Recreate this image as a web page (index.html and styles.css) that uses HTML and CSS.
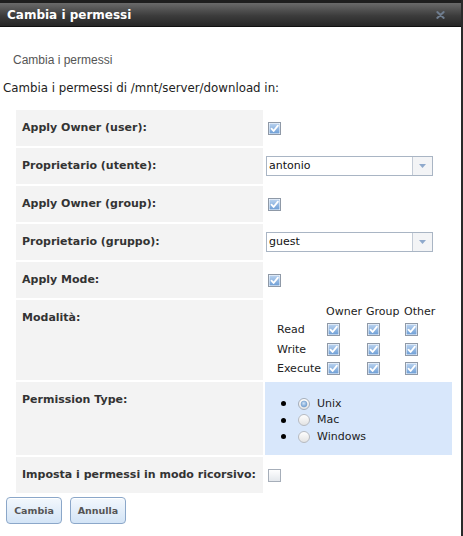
FILE: index.html
```html
<!DOCTYPE html>
<html lang="it">
<head>
<meta charset="utf-8">
<title>Cambia i permessi</title>
<link rel="stylesheet" href="styles.css">
</head>
<body>
<svg class="defs" width="0" height="0" aria-hidden="true">
  <defs>
    <linearGradient id="gChk" x1="0" y1="0" x2="0" y2="1">
      <stop offset="0" stop-color="#b9d2ef"/>
      <stop offset="1" stop-color="#6f9fd6"/>
    </linearGradient>
    <linearGradient id="gOff" x1="0" y1="0" x2="0" y2="1">
      <stop offset="0" stop-color="#ffffff"/>
      <stop offset="1" stop-color="#e3e7ec"/>
    </linearGradient>
    <linearGradient id="gRadio" x1="0" y1="0" x2="0" y2="1">
      <stop offset="0" stop-color="#ffffff"/>
      <stop offset="1" stop-color="#e2e2e2"/>
    </linearGradient>
    <radialGradient id="gDot" cx="0.45" cy="0.4" r="0.6">
      <stop offset="0" stop-color="#d2e4f7"/>
      <stop offset="1" stop-color="#6b9bd0"/>
    </radialGradient>
    <symbol id="chk" viewBox="0 0 13 13">
      <rect x="0.5" y="0.5" width="12" height="12" fill="#fff" stroke="#8f99a7"/>
      <rect x="1.5" y="1.5" width="10" height="10" fill="url(#gChk)"/>
      <path d="M3.5 6.7 L5.6 9 L9.9 3.6" fill="none" stroke="#ffffff" stroke-width="1.8" stroke-linecap="round" stroke-linejoin="round"/>
    </symbol>
    <symbol id="unchk" viewBox="0 0 13 13">
      <rect x="0.5" y="0.5" width="12" height="12" fill="url(#gOff)" stroke="#a6aeb9"/>
    </symbol>
    <symbol id="radioOn" viewBox="0 0 12 12">
      <circle cx="6" cy="6" r="5.5" fill="url(#gRadio)" stroke="#a3adba"/>
      <circle cx="6" cy="6" r="3" fill="url(#gDot)" stroke="#7aa3cf" stroke-width="0.6"/>
    </symbol>
    <symbol id="radioOff" viewBox="0 0 12 12">
      <circle cx="6" cy="6" r="5.5" fill="url(#gRadio)" stroke="#b6bac1"/>
    </symbol>
  </defs>
</svg>

<div class="dialog">
  <div class="titlebar">
    <span class="title">Cambia i permessi</span>
    <svg class="close" width="9" height="8" viewBox="0 0 9 8" aria-label="chiudi">
      <path d="M1.3 1.1 L7.7 6.9 M7.7 1.1 L1.3 6.9" stroke="#6f7d8f" stroke-width="2" stroke-linecap="round"/>
    </svg>
  </div>

  <div class="content">
    <p class="subtitle">Cambia i permessi</p>
    <p class="intro">Cambia i permessi di /mnt/server/download in:</p>

    <table class="form">
      <colgroup><col class="col-label"><col class="col-value"></colgroup>
      <tr>
        <th class="lbl">Apply Owner (user):</th>
        <td class="val"><svg class="cb"><use href="#chk"/></svg></td>
      </tr>
      <tr>
        <th class="lbl">Proprietario (utente):</th>
        <td class="val">
          <div class="select"><span class="sel-text">antonio</span><span class="sel-arrow"><svg width="7" height="4" viewBox="0 0 7 4"><path d="M0 0 H7 L3.5 4 Z" fill="#8fa9cc"/></svg></span></div>
        </td>
      </tr>
      <tr>
        <th class="lbl">Apply Owner (group):</th>
        <td class="val"><svg class="cb"><use href="#chk"/></svg></td>
      </tr>
      <tr>
        <th class="lbl">Proprietario (gruppo):</th>
        <td class="val">
          <div class="select"><span class="sel-text">guest</span><span class="sel-arrow"><svg width="7" height="4" viewBox="0 0 7 4"><path d="M0 0 H7 L3.5 4 Z" fill="#8fa9cc"/></svg></span></div>
        </td>
      </tr>
      <tr>
        <th class="lbl">Apply Mode:</th>
        <td class="val"><svg class="cb"><use href="#chk"/></svg></td>
      </tr>
      <tr>
        <th class="lbl">Modalità:</th>
        <td class="val val-mode">
          <table class="mode">
            <colgroup><col class="m0"><col class="m1"><col class="m2"><col class="m3"></colgroup>
            <tr class="mhead"><td></td><td>Owner</td><td>Group</td><td>Other</td></tr>
            <tr><td>Read</td><td><svg class="cb"><use href="#chk"/></svg></td><td><svg class="cb"><use href="#chk"/></svg></td><td><svg class="cb"><use href="#chk"/></svg></td></tr>
            <tr><td>Write</td><td><svg class="cb"><use href="#chk"/></svg></td><td><svg class="cb"><use href="#chk"/></svg></td><td><svg class="cb"><use href="#chk"/></svg></td></tr>
            <tr><td>Execute</td><td><svg class="cb"><use href="#chk"/></svg></td><td><svg class="cb"><use href="#chk"/></svg></td><td><svg class="cb"><use href="#chk"/></svg></td></tr>
          </table>
        </td>
      </tr>
      <tr>
        <th class="lbl">Permission Type:</th>
        <td class="val val-type">
          <ul class="radios">
            <li><svg class="rb"><use href="#radioOn"/></svg><span>Unix</span></li>
            <li><svg class="rb"><use href="#radioOff"/></svg><span>Mac</span></li>
            <li><svg class="rb"><use href="#radioOff"/></svg><span>Windows</span></li>
          </ul>
        </td>
      </tr>
      <tr>
        <th class="lbl">Imposta i permessi in modo ricorsivo:</th>
        <td class="val"><svg class="cb"><use href="#unchk"/></svg></td>
      </tr>
    </table>

    <div class="buttons">
      <button class="btn" type="button">Cambia</button>
      <button class="btn" type="button">Annulla</button>
    </div>
  </div>
</div>
</body>
</html>
```

FILE: styles.css
```css
html, body {
  margin: 0;
  padding: 0;
  background: #ffffff;
}

body {
  width: 463px;
  height: 536px;
  overflow: hidden;
  font-family: "DejaVu Sans", Verdana, sans-serif;
  font-size: 11px;
  color: #222;
}

.defs {
  position: absolute;
  width: 0;
  height: 0;
}

.dialog {
  width: 461px;
  height: 536px;
  border-right: 2px solid #2a2a2a;
  background: #fff;
}

.titlebar {
  height: 27px;
  box-sizing: border-box;
  border-top: 3px solid #1e1e1e;
  border-bottom: 1px solid #111;
  background: linear-gradient(#6a6a6a, #3c3c3c 55%, #262626);
  display: flex;
  align-items: center;
  justify-content: space-between;
  padding: 0 16px 0 7px;
}

.title {
  color: #fff;
  font-weight: bold;
  font-size: 12px;
  line-height: 16px;
}

.close {
  display: block;
}

.content {
  display: flex;
  flex-direction: column;
  align-items: flex-start;
}

.subtitle {
  margin: 0;
  padding: 26px 0 0 13px;
  font-family: "Liberation Sans", Arial, sans-serif;
  font-size: 12px;
  line-height: 14px;
  color: #555;
}

.intro {
  margin: 14px 0 0;
  padding-left: 3px;
  font-size: 11.8px;
  line-height: 14px;
  color: #222;
}

.form {
  margin: 13px 0 0 14px;
  border-spacing: 2px;
  table-layout: fixed;
  width: 440px;
}

.col-label { width: 247px; }
.col-value { width: 187px; }

.lbl {
  background: #f3f3f3;
  text-align: left;
  vertical-align: top;
  padding: 11px 6px;
  line-height: 14px;
  font-weight: bold;
  color: #333;
  white-space: nowrap;
}

.val {
  padding: 0 0 0 3px;
  vertical-align: middle;
}

.cb {
  display: block;
  width: 13px;
  height: 13px;
}

.select {
  width: 167px;
  height: 20px;
  box-sizing: border-box;
  border: 1px solid #a9b5c4;
  background: #fff;
  display: flex;
  margin-left: -2px;
}

.sel-text {
  flex: 1;
  line-height: 18px;
  padding-left: 2px;
  color: #111;
}

.sel-arrow {
  width: 19px;
  border-left: 1px solid #c3cbd6;
  background: #f3f4f6;
  display: flex;
  align-items: center;
  justify-content: center;
}

.val-mode {
  padding: 3px 0 1px 12px;
  vertical-align: top;
}

.mode {
  border-spacing: 0;
  table-layout: fixed;
  width: 161px;
}

.m0 { width: 49px; }
.m1 { width: 40px; }
.m2 { width: 38px; }
.m3 { width: 34px; }

.mode td {
  padding: 0;
  height: 19.5px;
  vertical-align: middle;
  color: #222;
}

.mode .mhead td {
  height: 17px;
}

.mode .cb {
  margin-left: 1px;
}

.val-type {
  background: #d8e7fb;
  vertical-align: top;
  padding: 14px 0 10px;
}

.radios {
  margin: 0;
  padding: 0;
  list-style: none;
}

.radios li {
  height: 16.5px;
  display: flex;
  align-items: center;
  padding-left: 16px;
}

.radios li::before {
  content: "";
  width: 5px;
  height: 5px;
  border-radius: 50%;
  background: #000;
  margin-right: 12px;
  flex: none;
}

.rb {
  width: 12px;
  height: 12px;
  margin-right: 7px;
  flex: none;
}

.radios span {
  color: #222;
  line-height: 14px;
}

.buttons {
  display: flex;
  gap: 8px;
  margin: 2px 0 0 6px;
}

.btn {
  width: 56px;
  height: 27px;
  border: 1px solid #8ba7c9;
  border-radius: 4px;
  background: linear-gradient(#f3f8fd, #d3e4f6);
  font-family: "DejaVu Sans", Verdana, sans-serif;
  font-weight: bold;
  font-size: 9.5px;
  color: #555;
  padding: 0;
  box-shadow: inset 0 1px 0 #fff;
}
```
